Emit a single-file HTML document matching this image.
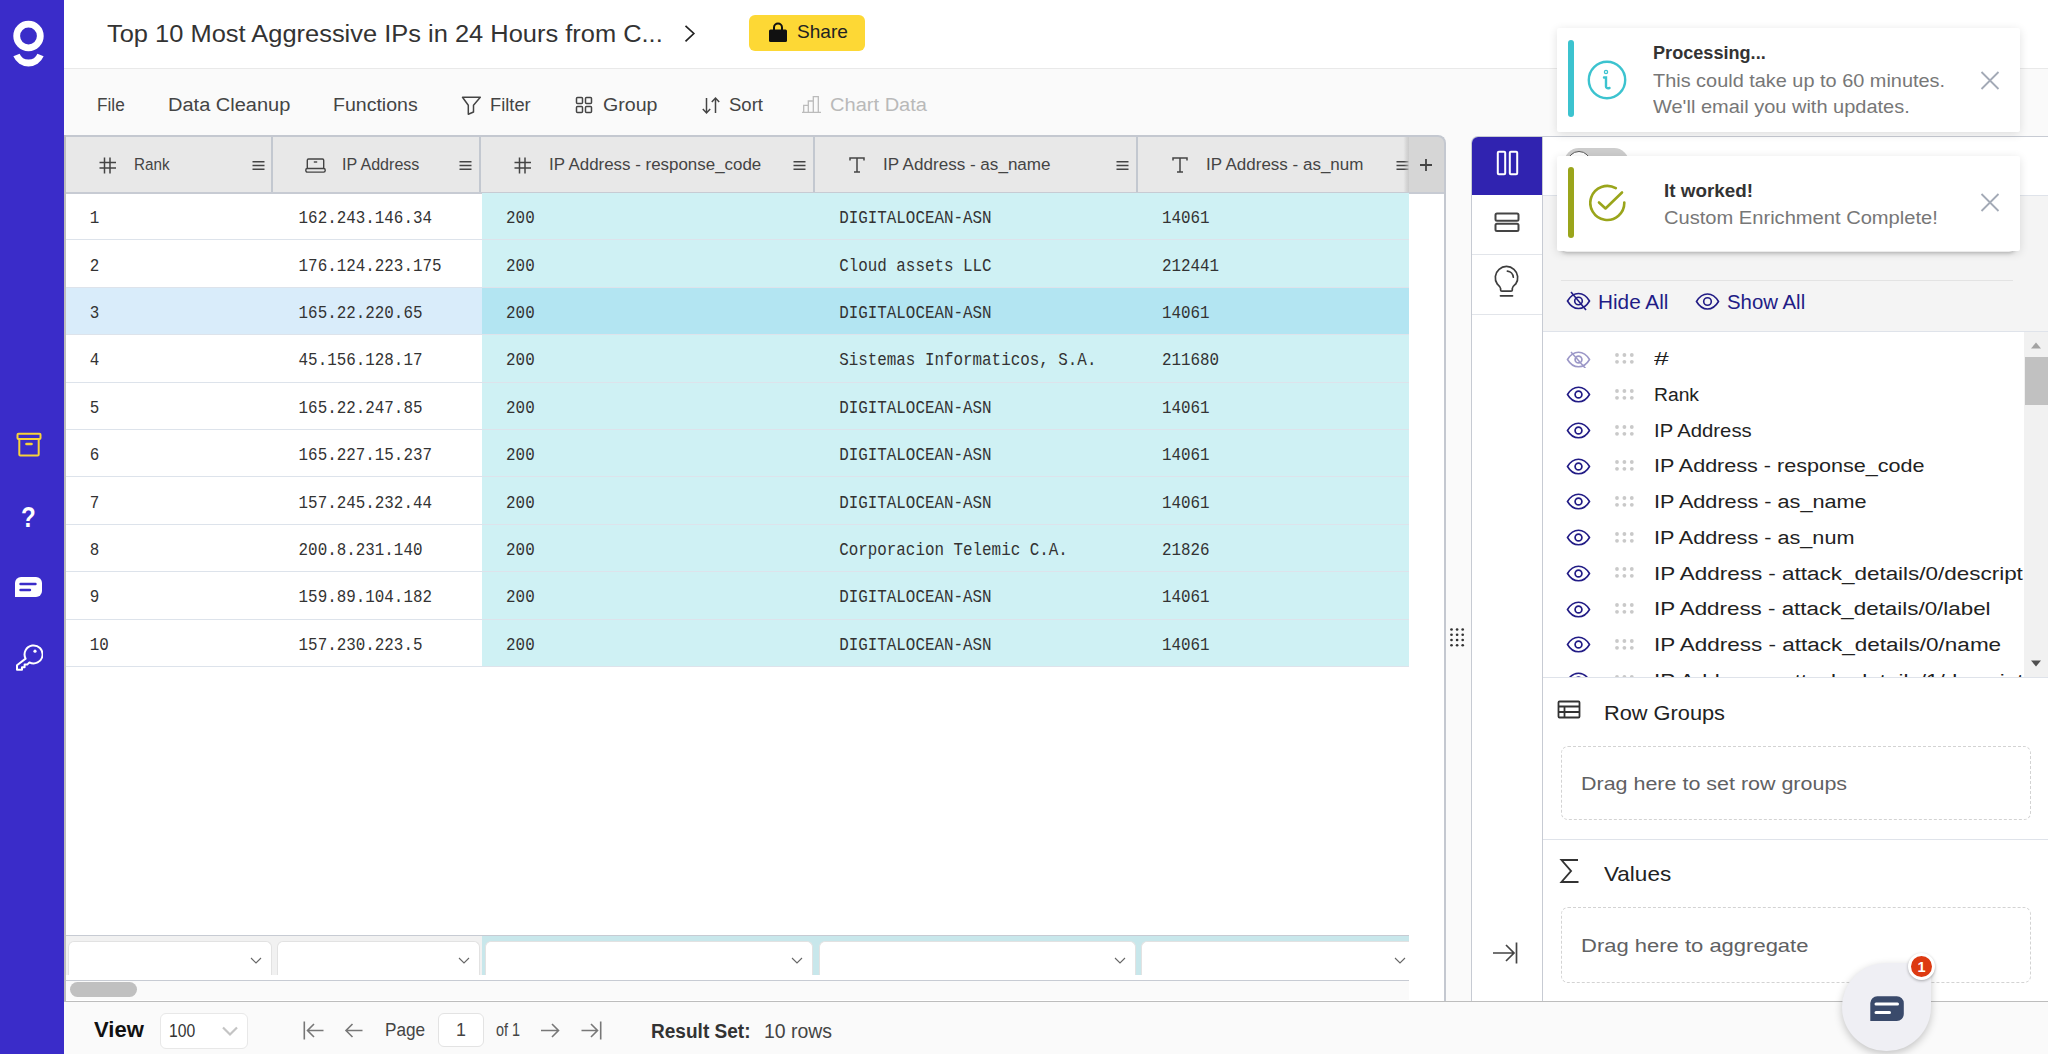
<!DOCTYPE html>
<html><head><meta charset="utf-8"><title>Grid</title><style>
html,body{margin:0;padding:0;width:2048px;height:1054px;overflow:hidden;position:relative;background:#fafafa}
.t{position:absolute;white-space:nowrap;transform-origin:0 0}
</style></head>
<body>
<div style="position:absolute;left:0px;top:0px;width:2048px;height:1054px;background:#fafafa"></div>
<div style="position:absolute;left:64px;top:0px;width:1984px;height:68px;background:#fff"></div>
<div style="position:absolute;left:64px;top:68px;width:1984px;height:1px;background:#e9e9e9"></div>
<div style="position:absolute;left:0px;top:0px;width:64px;height:1054px;background:#3a2cc9"></div>
<svg style="position:absolute;left:683px;top:24px" width="14" height="19" viewBox="0 0 14 19"><path d="M2.5 1.8 L10.8 9.5 L2.5 17.3" fill="none" stroke="#222" stroke-width="1.7"/></svg>
<div style="position:absolute;left:748.5px;top:15px;width:116.5px;height:36px;background:#fdd835;border-radius:6px"></div>
<svg style="position:absolute;left:768px;top:22px" width="20" height="21" viewBox="0 0 20 21"><path d="M6 8 V5.5 A4 4 0 0 1 14 5.5 V8" fill="none" stroke="#111" stroke-width="2"/><rect x="1" y="7.5" width="18" height="12.5" rx="1.5" fill="#111"/></svg>
<svg style="position:absolute;left:460px;top:95px" width="23" height="21" viewBox="0 0 23 21"><path d="M2.5 2.3 H20.3 L13.5 10.2 V17 L8.3 19.2 V10.2 Z" fill="none" stroke="#444" stroke-width="1.5" stroke-linejoin="round"/></svg>
<svg style="position:absolute;left:575.3px;top:95.8px" width="19" height="18" viewBox="0 0 19 18"><rect x="1.5" y="1.5" width="6" height="6" rx="1" fill="none" stroke="#444" stroke-width="1.5"/><rect x="10.5" y="1.5" width="6" height="6" rx="1" fill="none" stroke="#444" stroke-width="1.5"/><rect x="1.5" y="10.5" width="6" height="6" rx="1" fill="none" stroke="#444" stroke-width="1.5"/><rect x="10.5" y="10.5" width="6" height="6" rx="1" fill="none" stroke="#444" stroke-width="1.5"/></svg>
<svg style="position:absolute;left:701px;top:95.5px" width="20" height="19" viewBox="0 0 20 19"><path d="M5.5 2 V17 M1.8 13 L5.5 17 L9.2 13 M14.5 17 V2 M10.8 6 L14.5 2 L18.2 6" fill="none" stroke="#444" stroke-width="1.5"/></svg>
<svg style="position:absolute;left:801px;top:95px" width="21" height="20" viewBox="0 0 21 20"><path d="M1 17.3 H20 M2.7 17.3 V10.4 H7.3 V17.3 M7.3 17.3 V6 H12.3 V17.3 M12.3 17.3 V1.6 H17.3 V17.3" fill="none" stroke="#bbb" stroke-width="1.3"/></svg>
<div style="position:absolute;left:64.5px;top:135px;width:1381.0px;height:866px;background:#fff;border-top-right-radius:8px"></div>
<div style="position:absolute;left:65px;top:135.5px;width:1344px;height:57.5px;background:#e8e8e8"></div>
<div style="position:absolute;left:1408.7px;top:136.5px;width:35.3px;height:56.5px;background:#d6d6d6;border-top-right-radius:7px"></div>
<div style="position:absolute;left:1403px;top:136.5px;width:6px;height:56.5px;background:linear-gradient(90deg,rgba(0,0,0,0),rgba(0,0,0,.07))"></div>
<div style="position:absolute;left:66px;top:192px;width:1378px;height:1.5px;background:#c7cbd3"></div>
<div style="position:absolute;left:271.3px;top:136.5px;width:1.5px;height:55.5px;background:#c3c8d0"></div>
<div style="position:absolute;left:479.3px;top:136.5px;width:1.5px;height:55.5px;background:#c3c8d0"></div>
<div style="position:absolute;left:813px;top:136.5px;width:1.5px;height:55.5px;background:#c3c8d0"></div>
<div style="position:absolute;left:1136px;top:136.5px;width:1.5px;height:55.5px;background:#c3c8d0"></div>
<svg style="position:absolute;left:99px;top:156.5px" width="18" height="17" viewBox="0 0 18 17"><path d="M5.5 0.5 V16.5 M11 0.5 V16.5 M0.5 5.5 H17 M0.5 11 H17" fill="none" stroke="#444" stroke-width="1.5"/></svg>
<svg style="position:absolute;left:514px;top:156.5px" width="18" height="17" viewBox="0 0 18 17"><path d="M5.5 0.5 V16.5 M11 0.5 V16.5 M0.5 5.5 H17 M0.5 11 H17" fill="none" stroke="#444" stroke-width="1.5"/></svg>
<svg style="position:absolute;left:305px;top:157.5px" width="21" height="15" viewBox="0 0 21 15"><rect x="2.3" y="1" width="16.4" height="10" rx="1.2" fill="none" stroke="#444" stroke-width="1.4"/><rect x="0.8" y="10.5" width="19.4" height="3.6" rx="1.5" fill="#e8e8e8" stroke="#444" stroke-width="1.4"/><path d="M8.8 4 H12.2" stroke="#444" stroke-width="1.4"/></svg>
<svg style="position:absolute;left:849px;top:157px" width="16" height="16" viewBox="0 0 16 16"><path d="M1 3.5 V1 H15 V3.5 M8 1 V15 M5 15 H11" fill="none" stroke="#444" stroke-width="1.5"/></svg>
<svg style="position:absolute;left:1172px;top:157px" width="16" height="16" viewBox="0 0 16 16"><path d="M1 3.5 V1 H15 V3.5 M8 1 V15 M5 15 H11" fill="none" stroke="#444" stroke-width="1.5"/></svg>
<svg style="position:absolute;left:251.5px;top:160px" width="13" height="11" viewBox="0 0 13 11"><path d="M0.5 1.8 H12.5 M0.5 5.5 H12.5 M0.5 9.2 H12.5" stroke="#444" stroke-width="1.6"/></svg>
<svg style="position:absolute;left:459px;top:160px" width="13" height="11" viewBox="0 0 13 11"><path d="M0.5 1.8 H12.5 M0.5 5.5 H12.5 M0.5 9.2 H12.5" stroke="#444" stroke-width="1.6"/></svg>
<svg style="position:absolute;left:793px;top:160px" width="13" height="11" viewBox="0 0 13 11"><path d="M0.5 1.8 H12.5 M0.5 5.5 H12.5 M0.5 9.2 H12.5" stroke="#444" stroke-width="1.6"/></svg>
<svg style="position:absolute;left:1115.5px;top:160px" width="13" height="11" viewBox="0 0 13 11"><path d="M0.5 1.8 H12.5 M0.5 5.5 H12.5 M0.5 9.2 H12.5" stroke="#444" stroke-width="1.6"/></svg>
<svg style="position:absolute;left:1396px;top:160px" width="13" height="11" viewBox="0 0 13 11"><path d="M0.5 1.8 H12.5 M0.5 5.5 H12.5 M0.5 9.2 H12.5" stroke="#444" stroke-width="1.6"/></svg>
<div style="position:absolute;left:1408.7px;top:135.5px;width:36.5px;height:56.5px;background:#d6d6d6;border-top-right-radius:8px"></div>
<div style="position:absolute;left:1403.5px;top:137px;width:5.2px;height:55px;background:linear-gradient(90deg,rgba(214,214,214,0),rgba(200,200,200,.8))"></div>
<svg style="position:absolute;left:1419px;top:158px" width="14" height="14" viewBox="0 0 14 14"><path d="M7 1 V13 M1 7 H13" stroke="#444" stroke-width="1.8"/></svg>
<div style="position:absolute;left:481.8px;top:193.0px;width:927px;height:47.4px;background:#cff1f4"></div>
<div style="position:absolute;left:66px;top:239.4px;width:1342.7px;height:1px;background:#dde3eb"></div>
<div style="position:absolute;left:481.8px;top:240.4px;width:927px;height:47.4px;background:#cff1f4"></div>
<div style="position:absolute;left:66px;top:286.8px;width:1342.7px;height:1px;background:#dde3eb"></div>
<div style="position:absolute;left:66px;top:287.8px;width:415.8px;height:47.4px;background:#d9ecfa"></div>
<div style="position:absolute;left:481.8px;top:287.8px;width:927px;height:47.4px;background:#b3e5f2"></div>
<div style="position:absolute;left:66px;top:334.2px;width:1342.7px;height:1px;background:#dde3eb"></div>
<div style="position:absolute;left:481.8px;top:335.2px;width:927px;height:47.4px;background:#cff1f4"></div>
<div style="position:absolute;left:66px;top:381.59999999999997px;width:1342.7px;height:1px;background:#dde3eb"></div>
<div style="position:absolute;left:481.8px;top:382.6px;width:927px;height:47.4px;background:#cff1f4"></div>
<div style="position:absolute;left:66px;top:429.0px;width:1342.7px;height:1px;background:#dde3eb"></div>
<div style="position:absolute;left:481.8px;top:430.0px;width:927px;height:47.4px;background:#cff1f4"></div>
<div style="position:absolute;left:66px;top:476.4px;width:1342.7px;height:1px;background:#dde3eb"></div>
<div style="position:absolute;left:481.8px;top:477.4px;width:927px;height:47.4px;background:#cff1f4"></div>
<div style="position:absolute;left:66px;top:523.8px;width:1342.7px;height:1px;background:#dde3eb"></div>
<div style="position:absolute;left:481.8px;top:524.8px;width:927px;height:47.4px;background:#cff1f4"></div>
<div style="position:absolute;left:66px;top:571.1999999999999px;width:1342.7px;height:1px;background:#dde3eb"></div>
<div style="position:absolute;left:481.8px;top:572.2px;width:927px;height:47.4px;background:#cff1f4"></div>
<div style="position:absolute;left:66px;top:618.6px;width:1342.7px;height:1px;background:#dde3eb"></div>
<div style="position:absolute;left:481.8px;top:619.5999999999999px;width:927px;height:47.4px;background:#cff1f4"></div>
<div style="position:absolute;left:66px;top:665.9999999999999px;width:1342.7px;height:1px;background:#dde3eb"></div>
<div style="position:absolute;left:66px;top:935px;width:1342.7px;height:1px;background:#c7cbd3"></div>
<div style="position:absolute;left:66px;top:936px;width:1342.7px;height:43.60000000000002px;background:#f1f1f1"></div>
<div style="position:absolute;left:481.8px;top:936px;width:927px;height:43.60000000000002px;background:#c8e7eb"></div>
<div style="position:absolute;left:68.4px;top:940.5px;width:203.99999999999997px;height:34.0px;background:#fff;border:1px solid #e2e2e2;border-bottom:none;border-radius:6px 6px 0 0;box-sizing:border-box"></div>
<svg style="position:absolute;left:250.39999999999998px;top:956px" width="12" height="9" viewBox="0 0 12 9"><path d="M1 2 L6 7 L11 2" fill="none" stroke="#666" stroke-width="1.1"/></svg>
<div style="position:absolute;left:276.6px;top:940.5px;width:203.79999999999995px;height:34.0px;background:#fff;border:1px solid #e2e2e2;border-bottom:none;border-radius:6px 6px 0 0;box-sizing:border-box"></div>
<svg style="position:absolute;left:458.4px;top:956px" width="12" height="9" viewBox="0 0 12 9"><path d="M1 2 L6 7 L11 2" fill="none" stroke="#666" stroke-width="1.1"/></svg>
<div style="position:absolute;left:485px;top:940.5px;width:328.29999999999995px;height:34.0px;background:#fff;border:1px solid #e2e2e2;border-bottom:none;border-radius:6px 6px 0 0;box-sizing:border-box"></div>
<svg style="position:absolute;left:791.3px;top:956px" width="12" height="9" viewBox="0 0 12 9"><path d="M1 2 L6 7 L11 2" fill="none" stroke="#666" stroke-width="1.1"/></svg>
<div style="position:absolute;left:818.5px;top:940.5px;width:317.5px;height:34.0px;background:#fff;border:1px solid #e2e2e2;border-bottom:none;border-radius:6px 6px 0 0;box-sizing:border-box"></div>
<svg style="position:absolute;left:1114px;top:956px" width="12" height="9" viewBox="0 0 12 9"><path d="M1 2 L6 7 L11 2" fill="none" stroke="#666" stroke-width="1.1"/></svg>
<div style="position:absolute;left:1141px;top:940.5px;width:267.70000000000005px;height:34.0px;background:#fff;border:1px solid #e2e2e2;border-bottom:none;border-radius:6px 6px 0 0;box-sizing:border-box;border-right:none;border-top-right-radius:0"></div>
<svg style="position:absolute;left:1394px;top:956px" width="12" height="9" viewBox="0 0 12 9"><path d="M1 2 L6 7 L11 2" fill="none" stroke="#666" stroke-width="1.1"/></svg>
<div style="position:absolute;left:66px;top:975px;width:1342.7px;height:4.6px;background:#fff"></div>
<div style="position:absolute;left:66px;top:979.6px;width:1342.7px;height:1px;background:#c7cbd3"></div>
<div style="position:absolute;left:66px;top:980.6px;width:1342.7px;height:19.4px;background:#fafafa"></div>
<div style="position:absolute;left:70px;top:982px;width:67px;height:15px;background:#c0c0c0;border-radius:8px"></div>
<svg style="position:absolute;left:1450px;top:627.5px" width="15" height="20" viewBox="0 0 15 20"><circle cx="1.5" cy="1.5" r="1.35" fill="#333"/><circle cx="1.5" cy="6.75" r="1.35" fill="#333"/><circle cx="1.5" cy="12.0" r="1.35" fill="#333"/><circle cx="1.5" cy="17.25" r="1.35" fill="#333"/><circle cx="7.1" cy="1.5" r="1.35" fill="#333"/><circle cx="7.1" cy="6.75" r="1.35" fill="#333"/><circle cx="7.1" cy="12.0" r="1.35" fill="#333"/><circle cx="7.1" cy="17.25" r="1.35" fill="#333"/><circle cx="12.7" cy="1.5" r="1.35" fill="#333"/><circle cx="12.7" cy="6.75" r="1.35" fill="#333"/><circle cx="12.7" cy="12.0" r="1.35" fill="#333"/><circle cx="12.7" cy="17.25" r="1.35" fill="#333"/></svg>
<div style="position:absolute;left:1470.5px;top:135.5px;width:73px;height:866px;background:#fff;border:1.5px solid #c7cbd3;border-right:1px solid #c7cbd3;border-top-left-radius:7px;border-bottom:none;box-sizing:border-box"></div>
<div style="position:absolute;left:1472px;top:137px;width:70.5px;height:57.5px;background:#3023b0;border-top-left-radius:6px"></div>
<div style="position:absolute;left:1472px;top:254px;width:70px;height:1px;background:#e2e5ea"></div>
<div style="position:absolute;left:1472px;top:313.5px;width:70px;height:1px;background:#e2e5ea"></div>
<svg style="position:absolute;left:1496px;top:150px" width="23" height="26" viewBox="0 0 23 26"><rect x="1.8" y="1.8" width="7.4" height="22.4" rx="1" fill="none" stroke="#fff" stroke-width="2"/><rect x="13.8" y="1.8" width="7.4" height="22.4" rx="1" fill="none" stroke="#fff" stroke-width="2"/></svg>
<svg style="position:absolute;left:1494px;top:211.5px" width="26" height="21" viewBox="0 0 26 21"><rect x="1.5" y="1.5" width="23" height="7.2" rx="1.5" fill="none" stroke="#444" stroke-width="2"/><rect x="1.5" y="11.8" width="23" height="7.2" rx="1.5" fill="none" stroke="#444" stroke-width="2"/></svg>
<svg style="position:absolute;left:1493px;top:265px" width="27" height="33" viewBox="0 0 27 33"><path d="M4.27 19 A11.2 11.2 0 1 1 22.73 19 C20.5 21 19.3 21.8 19.3 23.5 V25 Q19.3 26.2 18 26.2 H8.9 Q7.6 26.2 7.6 25 V23.5 C7.6 21.8 6.5 21 4.27 19 Z" fill="none" stroke="#3d3d3d" stroke-width="1.7" stroke-linejoin="round"/><path d="M7.5 30.8 H19.5" stroke="#3d3d3d" stroke-width="1.8" stroke-linecap="round"/><path d="M14.4 6.1 A6.5 6.5 0 0 1 20.3 12.2" fill="none" stroke="#3d3d3d" stroke-width="1.7" stroke-linecap="round"/></svg>
<svg style="position:absolute;left:1491px;top:940px" width="28" height="26" viewBox="0 0 28 26"><path d="M2 13 H23 M15 5 L23 13 L15 21 M25.5 2.5 V23.5" fill="none" stroke="#444" stroke-width="1.7"/></svg>
<div style="position:absolute;left:1543px;top:135.5px;width:505px;height:1.5px;background:#c7cbd3"></div>
<div style="position:absolute;left:1543px;top:137px;width:505px;height:58px;background:#fff"></div>
<div style="position:absolute;left:1564px;top:148px;width:64.5px;height:30px;background:#cdcdcd;border-radius:15px"></div>
<div style="position:absolute;left:1567px;top:151px;width:24px;height:24px;background:#fff;border:1.5px solid #555;border-radius:50%;box-sizing:border-box"></div>
<div style="position:absolute;left:1543px;top:195px;width:505px;height:1px;background:#dfe3ea"></div>
<div style="position:absolute;left:1543px;top:196px;width:505px;height:135.5px;background:#f4f4f4"></div>
<div style="position:absolute;left:1561px;top:280px;width:452px;height:1px;background:#e3e3e3"></div>
<svg style="position:absolute;left:1566px;top:291px" width="25" height="20" viewBox="0 0 25 20"><path d="M1.5 10 C5 4 9 2.5 12.5 2.5 C16 2.5 20 4 23.5 10 C20 16 16 17.5 12.5 17.5 C9 17.5 5 16 1.5 10 Z" fill="none" stroke="#221c86" stroke-width="1.6"/><circle cx="12.5" cy="10" r="3.8" fill="none" stroke="#221c86" stroke-width="1.6"/><path d="M5 1 L20 19" stroke="#221c86" stroke-width="1.6"/></svg>
<svg style="position:absolute;left:1695px;top:292px" width="25" height="19" viewBox="0 0 25 19"><path d="M1.5 9.5 C5 3.5 9 2 12.5 2 C16 2 20 3.5 23.5 9.5 C20 15.5 16 17 12.5 17 C9 17 5 15.5 1.5 9.5 Z" fill="none" stroke="#221c86" stroke-width="1.6"/><circle cx="12.5" cy="9.5" r="3.8" fill="none" stroke="#221c86" stroke-width="1.6"/></svg>
<div style="position:absolute;left:1543px;top:331px;width:505px;height:1px;background:#dfe3ea"></div>
<div style="position:absolute;left:1543px;top:332px;width:505px;height:345px;background:#fff"></div>
<div style="position:absolute;left:1543px;top:332px;width:481px;height:345px;overflow:hidden">
<svg style="position:absolute;left:23px;top:18.50px" width="25" height="17" viewBox="0 0 25 17"><path d="M1.5 8.5 C5 2.5 9 1.2 12.5 1.2 C16 1.2 20 2.5 23.5 8.5 C20 14.5 16 15.8 12.5 15.8 C9 15.8 5 14.5 1.5 8.5 Z" fill="none" stroke="#9c98c8" stroke-width="1.6"/><circle cx="12.5" cy="8.5" r="3.4" fill="none" stroke="#9c98c8" stroke-width="1.7"/><path d="M5 1 L20 18" stroke="#9c98c8" stroke-width="1.5"/></svg>
<svg style="position:absolute;left:72.20000000000005px;top:21.10px" width="19" height="11" viewBox="0 0 19 11"><circle cx="2.0" cy="2.0" r="1.9" fill="#c9c9c9"/><circle cx="2.0" cy="8.8" r="1.9" fill="#c9c9c9"/><circle cx="9.4" cy="2.0" r="1.9" fill="#c9c9c9"/><circle cx="9.4" cy="8.8" r="1.9" fill="#c9c9c9"/><circle cx="16.8" cy="2.0" r="1.9" fill="#c9c9c9"/><circle cx="16.8" cy="8.8" r="1.9" fill="#c9c9c9"/></svg>
<svg style="position:absolute;left:23px;top:54.22px" width="25" height="17" viewBox="0 0 25 17"><path d="M1.5 8.5 C5 2.5 9 1.2 12.5 1.2 C16 1.2 20 2.5 23.5 8.5 C20 14.5 16 15.8 12.5 15.8 C9 15.8 5 14.5 1.5 8.5 Z" fill="none" stroke="#221c86" stroke-width="1.6"/><circle cx="12.5" cy="8.5" r="3.4" fill="none" stroke="#221c86" stroke-width="1.7"/></svg>
<svg style="position:absolute;left:72.20000000000005px;top:56.82px" width="19" height="11" viewBox="0 0 19 11"><circle cx="2.0" cy="2.0" r="1.9" fill="#c9c9c9"/><circle cx="2.0" cy="8.8" r="1.9" fill="#c9c9c9"/><circle cx="9.4" cy="2.0" r="1.9" fill="#c9c9c9"/><circle cx="9.4" cy="8.8" r="1.9" fill="#c9c9c9"/><circle cx="16.8" cy="2.0" r="1.9" fill="#c9c9c9"/><circle cx="16.8" cy="8.8" r="1.9" fill="#c9c9c9"/></svg>
<svg style="position:absolute;left:23px;top:89.94px" width="25" height="17" viewBox="0 0 25 17"><path d="M1.5 8.5 C5 2.5 9 1.2 12.5 1.2 C16 1.2 20 2.5 23.5 8.5 C20 14.5 16 15.8 12.5 15.8 C9 15.8 5 14.5 1.5 8.5 Z" fill="none" stroke="#221c86" stroke-width="1.6"/><circle cx="12.5" cy="8.5" r="3.4" fill="none" stroke="#221c86" stroke-width="1.7"/></svg>
<svg style="position:absolute;left:72.20000000000005px;top:92.54px" width="19" height="11" viewBox="0 0 19 11"><circle cx="2.0" cy="2.0" r="1.9" fill="#c9c9c9"/><circle cx="2.0" cy="8.8" r="1.9" fill="#c9c9c9"/><circle cx="9.4" cy="2.0" r="1.9" fill="#c9c9c9"/><circle cx="9.4" cy="8.8" r="1.9" fill="#c9c9c9"/><circle cx="16.8" cy="2.0" r="1.9" fill="#c9c9c9"/><circle cx="16.8" cy="8.8" r="1.9" fill="#c9c9c9"/></svg>
<svg style="position:absolute;left:23px;top:125.66px" width="25" height="17" viewBox="0 0 25 17"><path d="M1.5 8.5 C5 2.5 9 1.2 12.5 1.2 C16 1.2 20 2.5 23.5 8.5 C20 14.5 16 15.8 12.5 15.8 C9 15.8 5 14.5 1.5 8.5 Z" fill="none" stroke="#221c86" stroke-width="1.6"/><circle cx="12.5" cy="8.5" r="3.4" fill="none" stroke="#221c86" stroke-width="1.7"/></svg>
<svg style="position:absolute;left:72.20000000000005px;top:128.26px" width="19" height="11" viewBox="0 0 19 11"><circle cx="2.0" cy="2.0" r="1.9" fill="#c9c9c9"/><circle cx="2.0" cy="8.8" r="1.9" fill="#c9c9c9"/><circle cx="9.4" cy="2.0" r="1.9" fill="#c9c9c9"/><circle cx="9.4" cy="8.8" r="1.9" fill="#c9c9c9"/><circle cx="16.8" cy="2.0" r="1.9" fill="#c9c9c9"/><circle cx="16.8" cy="8.8" r="1.9" fill="#c9c9c9"/></svg>
<svg style="position:absolute;left:23px;top:161.38px" width="25" height="17" viewBox="0 0 25 17"><path d="M1.5 8.5 C5 2.5 9 1.2 12.5 1.2 C16 1.2 20 2.5 23.5 8.5 C20 14.5 16 15.8 12.5 15.8 C9 15.8 5 14.5 1.5 8.5 Z" fill="none" stroke="#221c86" stroke-width="1.6"/><circle cx="12.5" cy="8.5" r="3.4" fill="none" stroke="#221c86" stroke-width="1.7"/></svg>
<svg style="position:absolute;left:72.20000000000005px;top:163.98px" width="19" height="11" viewBox="0 0 19 11"><circle cx="2.0" cy="2.0" r="1.9" fill="#c9c9c9"/><circle cx="2.0" cy="8.8" r="1.9" fill="#c9c9c9"/><circle cx="9.4" cy="2.0" r="1.9" fill="#c9c9c9"/><circle cx="9.4" cy="8.8" r="1.9" fill="#c9c9c9"/><circle cx="16.8" cy="2.0" r="1.9" fill="#c9c9c9"/><circle cx="16.8" cy="8.8" r="1.9" fill="#c9c9c9"/></svg>
<svg style="position:absolute;left:23px;top:197.10px" width="25" height="17" viewBox="0 0 25 17"><path d="M1.5 8.5 C5 2.5 9 1.2 12.5 1.2 C16 1.2 20 2.5 23.5 8.5 C20 14.5 16 15.8 12.5 15.8 C9 15.8 5 14.5 1.5 8.5 Z" fill="none" stroke="#221c86" stroke-width="1.6"/><circle cx="12.5" cy="8.5" r="3.4" fill="none" stroke="#221c86" stroke-width="1.7"/></svg>
<svg style="position:absolute;left:72.20000000000005px;top:199.70px" width="19" height="11" viewBox="0 0 19 11"><circle cx="2.0" cy="2.0" r="1.9" fill="#c9c9c9"/><circle cx="2.0" cy="8.8" r="1.9" fill="#c9c9c9"/><circle cx="9.4" cy="2.0" r="1.9" fill="#c9c9c9"/><circle cx="9.4" cy="8.8" r="1.9" fill="#c9c9c9"/><circle cx="16.8" cy="2.0" r="1.9" fill="#c9c9c9"/><circle cx="16.8" cy="8.8" r="1.9" fill="#c9c9c9"/></svg>
<svg style="position:absolute;left:23px;top:232.82px" width="25" height="17" viewBox="0 0 25 17"><path d="M1.5 8.5 C5 2.5 9 1.2 12.5 1.2 C16 1.2 20 2.5 23.5 8.5 C20 14.5 16 15.8 12.5 15.8 C9 15.8 5 14.5 1.5 8.5 Z" fill="none" stroke="#221c86" stroke-width="1.6"/><circle cx="12.5" cy="8.5" r="3.4" fill="none" stroke="#221c86" stroke-width="1.7"/></svg>
<svg style="position:absolute;left:72.20000000000005px;top:235.42px" width="19" height="11" viewBox="0 0 19 11"><circle cx="2.0" cy="2.0" r="1.9" fill="#c9c9c9"/><circle cx="2.0" cy="8.8" r="1.9" fill="#c9c9c9"/><circle cx="9.4" cy="2.0" r="1.9" fill="#c9c9c9"/><circle cx="9.4" cy="8.8" r="1.9" fill="#c9c9c9"/><circle cx="16.8" cy="2.0" r="1.9" fill="#c9c9c9"/><circle cx="16.8" cy="8.8" r="1.9" fill="#c9c9c9"/></svg>
<svg style="position:absolute;left:23px;top:268.54px" width="25" height="17" viewBox="0 0 25 17"><path d="M1.5 8.5 C5 2.5 9 1.2 12.5 1.2 C16 1.2 20 2.5 23.5 8.5 C20 14.5 16 15.8 12.5 15.8 C9 15.8 5 14.5 1.5 8.5 Z" fill="none" stroke="#221c86" stroke-width="1.6"/><circle cx="12.5" cy="8.5" r="3.4" fill="none" stroke="#221c86" stroke-width="1.7"/></svg>
<svg style="position:absolute;left:72.20000000000005px;top:271.14px" width="19" height="11" viewBox="0 0 19 11"><circle cx="2.0" cy="2.0" r="1.9" fill="#c9c9c9"/><circle cx="2.0" cy="8.8" r="1.9" fill="#c9c9c9"/><circle cx="9.4" cy="2.0" r="1.9" fill="#c9c9c9"/><circle cx="9.4" cy="8.8" r="1.9" fill="#c9c9c9"/><circle cx="16.8" cy="2.0" r="1.9" fill="#c9c9c9"/><circle cx="16.8" cy="8.8" r="1.9" fill="#c9c9c9"/></svg>
<svg style="position:absolute;left:23px;top:304.26px" width="25" height="17" viewBox="0 0 25 17"><path d="M1.5 8.5 C5 2.5 9 1.2 12.5 1.2 C16 1.2 20 2.5 23.5 8.5 C20 14.5 16 15.8 12.5 15.8 C9 15.8 5 14.5 1.5 8.5 Z" fill="none" stroke="#221c86" stroke-width="1.6"/><circle cx="12.5" cy="8.5" r="3.4" fill="none" stroke="#221c86" stroke-width="1.7"/></svg>
<svg style="position:absolute;left:72.20000000000005px;top:306.86px" width="19" height="11" viewBox="0 0 19 11"><circle cx="2.0" cy="2.0" r="1.9" fill="#c9c9c9"/><circle cx="2.0" cy="8.8" r="1.9" fill="#c9c9c9"/><circle cx="9.4" cy="2.0" r="1.9" fill="#c9c9c9"/><circle cx="9.4" cy="8.8" r="1.9" fill="#c9c9c9"/><circle cx="16.8" cy="2.0" r="1.9" fill="#c9c9c9"/><circle cx="16.8" cy="8.8" r="1.9" fill="#c9c9c9"/></svg>
<svg style="position:absolute;left:23px;top:339.98px" width="25" height="17" viewBox="0 0 25 17"><path d="M1.5 8.5 C5 2.5 9 1.2 12.5 1.2 C16 1.2 20 2.5 23.5 8.5 C20 14.5 16 15.8 12.5 15.8 C9 15.8 5 14.5 1.5 8.5 Z" fill="none" stroke="#221c86" stroke-width="1.6"/><circle cx="12.5" cy="8.5" r="3.4" fill="none" stroke="#221c86" stroke-width="1.7"/></svg>
<svg style="position:absolute;left:72.20000000000005px;top:342.58px" width="19" height="11" viewBox="0 0 19 11"><circle cx="2.0" cy="2.0" r="1.9" fill="#c9c9c9"/><circle cx="2.0" cy="8.8" r="1.9" fill="#c9c9c9"/><circle cx="9.4" cy="2.0" r="1.9" fill="#c9c9c9"/><circle cx="9.4" cy="8.8" r="1.9" fill="#c9c9c9"/><circle cx="16.8" cy="2.0" r="1.9" fill="#c9c9c9"/><circle cx="16.8" cy="8.8" r="1.9" fill="#c9c9c9"/></svg>
</div>
<div style="position:absolute;left:2024px;top:332px;width:24px;height:345px;background:#f1f1f1"></div>
<svg style="position:absolute;left:2030px;top:340px" width="12" height="10" viewBox="0 0 12 10"><path d="M1 8.5 L6 2.5 L11 8.5 Z" fill="#a3a3a3"/></svg>
<svg style="position:absolute;left:2030px;top:659px" width="12" height="10" viewBox="0 0 12 10"><path d="M1 1.5 L6 7.5 L11 1.5 Z" fill="#505050"/></svg>
<div style="position:absolute;left:2025px;top:357px;width:23px;height:48px;background:#c1c1c1"></div>
<div style="position:absolute;left:1543px;top:677px;width:505px;height:1px;background:#dfe3ea"></div>
<div style="position:absolute;left:1543px;top:678px;width:505px;height:323px;background:#fff"></div>
<svg style="position:absolute;left:1557px;top:700px" width="24" height="19" viewBox="0 0 24 19"><rect x="1.5" y="1.5" width="21" height="16" rx="1" fill="none" stroke="#333" stroke-width="1.8"/><path d="M1.5 6.5 H22.5 M1.5 12 H22.5 M7.5 6.5 V17.5" stroke="#333" stroke-width="1.8"/></svg>
<div style="position:absolute;left:1561.3px;top:745.8px;width:470px;height:74.5px;border:1px dashed #d3d3d3;border-radius:7px;box-sizing:border-box"></div>
<div style="position:absolute;left:1543px;top:839px;width:505px;height:1px;background:#dfe3ea"></div>
<svg style="position:absolute;left:1559px;top:858px" width="22" height="26" viewBox="0 0 22 26"><path d="M19 2 H2.5 L12 13 L2.5 24 H19.5" fill="none" stroke="#333" stroke-width="1.9" stroke-linejoin="miter"/></svg>
<div style="position:absolute;left:1561.3px;top:907.3px;width:470px;height:75.8px;border:1px dashed #d3d3d3;border-radius:7px;box-sizing:border-box"></div>
<div style="position:absolute;left:64px;top:1000.5px;width:1984px;height:1.2px;background:#bdbdbd"></div>
<div style="position:absolute;left:64px;top:1001.7px;width:1984px;height:52.3px;background:#fafafa"></div>
<div style="position:absolute;left:160.3px;top:1012.5px;width:88px;height:36px;background:#fff;border:1px solid #e8e8e8;border-radius:6px;box-sizing:border-box"></div>
<svg style="position:absolute;left:221px;top:1025px" width="18" height="12" viewBox="0 0 18 12"><path d="M2 2.5 L9 9.5 L16 2.5" fill="none" stroke="#c4c4c4" stroke-width="2.2"/></svg>
<svg style="position:absolute;left:302px;top:1020px" width="23" height="21" viewBox="0 0 23 21"><path d="M2.3 1.5 V19.5 M21.5 10.5 H5.5 M12 4 L5.5 10.5 L12 17" fill="none" stroke="#777" stroke-width="1.6"/></svg>
<svg style="position:absolute;left:343px;top:1020px" width="21" height="21" viewBox="0 0 21 21"><path d="M19.5 10.5 H3 M9.5 4 L3 10.5 L9.5 17" fill="none" stroke="#777" stroke-width="1.6"/></svg>
<div style="position:absolute;left:438px;top:1013.4px;width:46px;height:34px;background:#fff;border:1px solid #e3e3e3;border-radius:6px;box-sizing:border-box"></div>
<svg style="position:absolute;left:539px;top:1020px" width="22" height="21" viewBox="0 0 22 21"><path d="M2 10.5 H19.5 M13 4 L19.5 10.5 L13 17" fill="none" stroke="#777" stroke-width="1.6"/></svg>
<svg style="position:absolute;left:580px;top:1020px" width="23" height="21" viewBox="0 0 23 21"><path d="M1.5 10.5 H17.5 M11 4 L17.5 10.5 L11 17 M20.7 1.5 V19.5" fill="none" stroke="#777" stroke-width="1.6"/></svg>
<div style="position:absolute;left:1542px;top:136px;width:1.3px;height:865px;background:#c7cbd3"></div>
<div style="position:absolute;left:64.5px;top:135px;width:1381.0px;height:866px;border:2px solid #c4c8d0;border-left:none;border-bottom:none;border-top-right-radius:8px;box-sizing:border-box"></div>
<div style="position:absolute;left:64px;top:135px;width:1.8px;height:866px;background:#bdbdbd"></div>
<div style="position:absolute;left:1557px;top:28px;width:462.5px;height:103.5px;background:#fff;box-shadow:0 2px 10px rgba(0,0,0,.12);border-radius:2px"></div>
<div style="position:absolute;left:1568px;top:39.7px;width:6px;height:77px;background:#3cc3cf;border-radius:3px"></div>
<svg style="position:absolute;left:1586px;top:59px" width="42" height="42" viewBox="0 0 42 42"><circle cx="21" cy="21" r="18.2" fill="none" stroke="#3cc3cf" stroke-width="2.4"/><circle cx="20" cy="13" r="1.6" fill="none" stroke="#3cc3cf" stroke-width="1.3"/><path d="M18 18.5 H20 V27.5 C20 29 21 29.5 23.5 29" fill="none" stroke="#3cc3cf" stroke-width="2.4" stroke-linecap="round"/></svg>
<svg style="position:absolute;left:1979px;top:70px" width="22" height="21" viewBox="0 0 22 21"><path d="M2.5 2 L19.5 19 M19.5 2 L2.5 19" stroke="#a3aab6" stroke-width="1.8"/></svg>
<div style="position:absolute;left:1561px;top:246px;width:454px;height:6px;background:#fff;box-shadow:0 1px 4px rgba(0,0,0,.25);border-radius:0 0 6px 6px"></div>
<div style="position:absolute;left:1557px;top:156px;width:462.5px;height:95px;background:#fff;box-shadow:0 2px 10px rgba(0,0,0,.12);border-radius:2px"></div>
<div style="position:absolute;left:1568px;top:167px;width:6px;height:71px;background:#9aa51b;border-radius:3px"></div>
<svg style="position:absolute;left:1588.5px;top:184px" width="40" height="40" viewBox="0 0 40 40"><path d="M35.3 18.5 A17 17 0 1 1 26.8 4.2" fill="none" stroke="#9aa51b" stroke-width="2.6" stroke-linecap="round"/><path d="M10 18.5 L16.5 24.5 L33 8.5" fill="none" stroke="#9aa51b" stroke-width="2.6" stroke-linecap="round" stroke-linejoin="round"/></svg>
<svg style="position:absolute;left:1979px;top:192px" width="22" height="21" viewBox="0 0 22 21"><path d="M2.5 2 L19.5 19 M19.5 2 L2.5 19" stroke="#a3aab6" stroke-width="1.8"/></svg>
<div style="position:absolute;left:1842.2px;top:962.7px;width:88.7px;height:88.7px;background:#efeff4;border-radius:50% 0 50% 50%;box-shadow:0 3px 8px rgba(0,0,0,.22)"></div>
<svg style="position:absolute;left:1869px;top:995px" width="36" height="27" viewBox="0 0 36 27"><path d="M1.3 8 A7 7 0 0 1 8.3 1.3 H27.8 A7 7 0 0 1 34.8 8.3 V19 A7 7 0 0 1 27.8 26 H1.3 Z" fill="#3a4a6b"/><path d="M7 9 H28.5 M7 17.5 H20.5" stroke="#fff" stroke-width="3" stroke-linecap="round"/></svg>
<div style="position:absolute;left:1908px;top:952.5px;width:27px;height:27px;background:#dd3a12;border:3px solid #fff;border-radius:50%;box-sizing:border-box;box-shadow:0 1px 3px rgba(0,0,0,.3)"></div>
<svg style="position:absolute;left:12px;top:20px" width="34" height="49" viewBox="0 0 34 49"><circle cx="16.5" cy="16" r="11.8" fill="none" stroke="#fff" stroke-width="6.8"/><path d="M4.5 35 A13 13 0 0 0 28.5 35" fill="none" stroke="#fff" stroke-width="6.8"/></svg>
<svg style="position:absolute;left:16px;top:432px" width="26" height="25" viewBox="0 0 26 25"><rect x="1.5" y="1.8" width="23" height="5.2" rx="1" fill="none" stroke="#f7d23a" stroke-width="2"/><path d="M3.3 7 V22.5 A1 1 0 0 0 4.3 23.5 H21.7 A1 1 0 0 0 22.7 22.5 V7" fill="none" stroke="#f7d23a" stroke-width="2"/><path d="M10.5 12 H15.5" stroke="#f7d23a" stroke-width="2.6" stroke-linecap="round"/></svg>
<svg style="position:absolute;left:14px;top:576px" width="29" height="22" viewBox="0 0 29 22"><path d="M1 7 A6 6 0 0 1 7 1 H22 A6 6 0 0 1 28 7 V15 A6 6 0 0 1 22 21 H1 Z" fill="#fff"/><path d="M6.5 8 H21.5 M6.5 14 H16" stroke="#3a2cc9" stroke-width="2.4" stroke-linecap="round"/></svg>
<svg style="position:absolute;left:14px;top:644px" width="29" height="28" viewBox="0 0 29 28"><path d="M11.6 14.6 A9 9 0 1 1 15.4 18.4 L13.2 20.6 H10.6 V23.2 H8 V25.8 H3 V21.2 Z" fill="none" stroke="#fff" stroke-width="2" stroke-linejoin="round"/><circle cx="21" cy="7.2" r="1.6" fill="#fff"/></svg>
<div style="position:absolute;left:1543px;top:332px;width:481px;height:345px;overflow:hidden">
<div class="t" id="li0" style="left:110.60px;top:17.24px;font-size:19.13px;line-height:19.13px;font-family:'Liberation Sans', sans-serif;color:#222;transform:scaleX(1.3818);">#</div>
<div class="t" id="li1" style="left:110.60px;top:52.96px;font-size:19.13px;line-height:19.13px;font-family:'Liberation Sans', sans-serif;color:#222;transform:scaleX(1.0089);">Rank</div>
<div class="t" id="li2" style="left:110.60px;top:88.68px;font-size:19.13px;line-height:19.13px;font-family:'Liberation Sans', sans-serif;color:#222;transform:scaleX(1.0609);">IP Address</div>
<div class="t" id="li3" style="left:110.60px;top:124.40px;font-size:19.13px;line-height:19.13px;font-family:'Liberation Sans', sans-serif;color:#222;transform:scaleX(1.1279);">IP Address - response_code</div>
<div class="t" id="li4" style="left:110.60px;top:160.12px;font-size:19.13px;line-height:19.13px;font-family:'Liberation Sans', sans-serif;color:#222;transform:scaleX(1.1330);">IP Address - as_name</div>
<div class="t" id="li5" style="left:110.60px;top:195.84px;font-size:19.13px;line-height:19.13px;font-family:'Liberation Sans', sans-serif;color:#222;transform:scaleX(1.1322);">IP Address - as_num</div>
<div class="t" id="li6" style="left:110.60px;top:231.56px;font-size:19.13px;line-height:19.13px;font-family:'Liberation Sans', sans-serif;color:#222;transform:scaleX(1.1745);">IP Address - attack_details/0/descript</div>
<div class="t" id="li7" style="left:110.60px;top:267.28px;font-size:19.13px;line-height:19.13px;font-family:'Liberation Sans', sans-serif;color:#222;transform:scaleX(1.1705);">IP Address - attack_details/0/label</div>
<div class="t" id="li8" style="left:110.60px;top:303.00px;font-size:19.13px;line-height:19.13px;font-family:'Liberation Sans', sans-serif;color:#222;transform:scaleX(1.1769);">IP Address - attack_details/0/name</div>
<div class="t" id="li9" style="left:110.60px;top:338.72px;font-size:19.13px;line-height:19.13px;font-family:'Liberation Sans', sans-serif;color:#222;transform:scaleX(1.1765);">IP Address - attack_details/1/description</div>
</div>
<div class="t" id="title" style="left:106.80px;top:21.85px;font-size:24.06px;line-height:24.06px;font-family:'Liberation Sans', sans-serif;color:#333;font-weight:400;transform:scaleX(1.0581);">Top 10 Most Aggressive IPs in 24 Hours from C...</div>
<div class="t" id="share" style="left:796.50px;top:24.32px;font-size:17.97px;line-height:17.97px;font-family:'Liberation Sans', sans-serif;color:#222;font-weight:400;transform:scaleX(1.0625);">Share</div>
<div class="t" id="tb1" style="left:97.00px;top:95.86px;font-size:18.41px;line-height:18.41px;font-family:'Liberation Sans', sans-serif;color:#444;font-weight:400;transform:scaleX(0.9333);">File</div>
<div class="t" id="tb2" style="left:167.80px;top:95.86px;font-size:18.41px;line-height:18.41px;font-family:'Liberation Sans', sans-serif;color:#444;font-weight:400;transform:scaleX(1.0867);">Data Cleanup</div>
<div class="t" id="tb3" style="left:332.60px;top:95.86px;font-size:18.41px;line-height:18.41px;font-family:'Liberation Sans', sans-serif;color:#444;font-weight:400;transform:scaleX(1.0613);">Functions</div>
<div class="t" id="tb4" style="left:490.00px;top:95.86px;font-size:18.41px;line-height:18.41px;font-family:'Liberation Sans', sans-serif;color:#444;font-weight:400;transform:scaleX(0.9951);">Filter</div>
<div class="t" id="tb5" style="left:603.00px;top:95.86px;font-size:18.41px;line-height:18.41px;font-family:'Liberation Sans', sans-serif;color:#444;font-weight:400;transform:scaleX(1.0647);">Group</div>
<div class="t" id="tb6" style="left:729.30px;top:95.86px;font-size:18.41px;line-height:18.41px;font-family:'Liberation Sans', sans-serif;color:#444;font-weight:400;transform:scaleX(1.0059);">Sort</div>
<div class="t" id="tb7" style="left:830.00px;top:95.86px;font-size:18.41px;line-height:18.41px;font-family:'Liberation Sans', sans-serif;color:#b9b9b9;font-weight:400;transform:scaleX(1.0899);">Chart Data</div>
<div class="t" id="h1" style="left:134.00px;top:157.40px;font-size:15.65px;line-height:15.65px;font-family:'Liberation Sans', sans-serif;color:#444;font-weight:400;transform:scaleX(0.9730);">Rank</div>
<div class="t" id="h2" style="left:341.70px;top:157.40px;font-size:15.65px;line-height:15.65px;font-family:'Liberation Sans', sans-serif;color:#444;font-weight:400;transform:scaleX(1.0267);">IP Address</div>
<div class="t" id="h3" style="left:549.00px;top:157.40px;font-size:15.65px;line-height:15.65px;font-family:'Liberation Sans', sans-serif;color:#444;font-weight:400;transform:scaleX(1.0816);">IP Address - response_code</div>
<div class="t" id="h4" style="left:883.00px;top:157.40px;font-size:15.65px;line-height:15.65px;font-family:'Liberation Sans', sans-serif;color:#444;font-weight:400;transform:scaleX(1.0909);">IP Address - as_name</div>
<div class="t" id="h5" style="left:1205.50px;top:157.40px;font-size:15.65px;line-height:15.65px;font-family:'Liberation Sans', sans-serif;color:#444;font-weight:400;transform:scaleX(1.0862);">IP Address - as_num</div>
<div class="t" id="r0c0" style="left:89.80px;top:212.13px;font-size:15.88px;line-height:15.88px;font-family:'Liberation Mono', monospace;color:#333;font-weight:400;transform-origin:0 12.17px;transform:scaleY(1.12);">1</div>
<div class="t" id="r0c1" style="left:298.60px;top:212.13px;font-size:15.88px;line-height:15.88px;font-family:'Liberation Mono', monospace;color:#333;font-weight:400;transform-origin:0 12.17px;transform:scaleY(1.12);">162.243.146.34</div>
<div class="t" id="r0c2" style="left:506.10px;top:212.13px;font-size:15.88px;line-height:15.88px;font-family:'Liberation Mono', monospace;color:#333;font-weight:400;transform-origin:0 12.17px;transform:scaleY(1.12);">200</div>
<div class="t" id="r0c3" style="left:839.20px;top:212.13px;font-size:15.88px;line-height:15.88px;font-family:'Liberation Mono', monospace;color:#333;font-weight:400;transform-origin:0 12.17px;transform:scaleY(1.12);">DIGITALOCEAN-ASN</div>
<div class="t" id="r0c4" style="left:1161.90px;top:212.13px;font-size:15.88px;line-height:15.88px;font-family:'Liberation Mono', monospace;color:#333;font-weight:400;transform-origin:0 12.17px;transform:scaleY(1.12);">14061</div>
<div class="t" id="r1c0" style="left:89.80px;top:259.53px;font-size:15.88px;line-height:15.88px;font-family:'Liberation Mono', monospace;color:#333;font-weight:400;transform-origin:0 12.17px;transform:scaleY(1.12);">2</div>
<div class="t" id="r1c1" style="left:298.60px;top:259.53px;font-size:15.88px;line-height:15.88px;font-family:'Liberation Mono', monospace;color:#333;font-weight:400;transform-origin:0 12.17px;transform:scaleY(1.12);">176.124.223.175</div>
<div class="t" id="r1c2" style="left:506.10px;top:259.53px;font-size:15.88px;line-height:15.88px;font-family:'Liberation Mono', monospace;color:#333;font-weight:400;transform-origin:0 12.17px;transform:scaleY(1.12);">200</div>
<div class="t" id="r1c3" style="left:839.20px;top:259.53px;font-size:15.88px;line-height:15.88px;font-family:'Liberation Mono', monospace;color:#333;font-weight:400;transform-origin:0 12.17px;transform:scaleY(1.12);">Cloud assets LLC</div>
<div class="t" id="r1c4" style="left:1161.90px;top:259.53px;font-size:15.88px;line-height:15.88px;font-family:'Liberation Mono', monospace;color:#333;font-weight:400;transform-origin:0 12.17px;transform:scaleY(1.12);">212441</div>
<div class="t" id="r2c0" style="left:89.80px;top:306.93px;font-size:15.88px;line-height:15.88px;font-family:'Liberation Mono', monospace;color:#333;font-weight:400;transform-origin:0 12.17px;transform:scaleY(1.12);">3</div>
<div class="t" id="r2c1" style="left:298.60px;top:306.93px;font-size:15.88px;line-height:15.88px;font-family:'Liberation Mono', monospace;color:#333;font-weight:400;transform-origin:0 12.17px;transform:scaleY(1.12);">165.22.220.65</div>
<div class="t" id="r2c2" style="left:506.10px;top:306.93px;font-size:15.88px;line-height:15.88px;font-family:'Liberation Mono', monospace;color:#333;font-weight:400;transform-origin:0 12.17px;transform:scaleY(1.12);">200</div>
<div class="t" id="r2c3" style="left:839.20px;top:306.93px;font-size:15.88px;line-height:15.88px;font-family:'Liberation Mono', monospace;color:#333;font-weight:400;transform-origin:0 12.17px;transform:scaleY(1.12);">DIGITALOCEAN-ASN</div>
<div class="t" id="r2c4" style="left:1161.90px;top:306.93px;font-size:15.88px;line-height:15.88px;font-family:'Liberation Mono', monospace;color:#333;font-weight:400;transform-origin:0 12.17px;transform:scaleY(1.12);">14061</div>
<div class="t" id="r3c0" style="left:89.80px;top:354.33px;font-size:15.88px;line-height:15.88px;font-family:'Liberation Mono', monospace;color:#333;font-weight:400;transform-origin:0 12.17px;transform:scaleY(1.12);">4</div>
<div class="t" id="r3c1" style="left:298.60px;top:354.33px;font-size:15.88px;line-height:15.88px;font-family:'Liberation Mono', monospace;color:#333;font-weight:400;transform-origin:0 12.17px;transform:scaleY(1.12);">45.156.128.17</div>
<div class="t" id="r3c2" style="left:506.10px;top:354.33px;font-size:15.88px;line-height:15.88px;font-family:'Liberation Mono', monospace;color:#333;font-weight:400;transform-origin:0 12.17px;transform:scaleY(1.12);">200</div>
<div class="t" id="r3c3" style="left:839.20px;top:354.33px;font-size:15.88px;line-height:15.88px;font-family:'Liberation Mono', monospace;color:#333;font-weight:400;transform-origin:0 12.17px;transform:scaleY(1.12);">Sistemas Informaticos, S.A.</div>
<div class="t" id="r3c4" style="left:1161.90px;top:354.33px;font-size:15.88px;line-height:15.88px;font-family:'Liberation Mono', monospace;color:#333;font-weight:400;transform-origin:0 12.17px;transform:scaleY(1.12);">211680</div>
<div class="t" id="r4c0" style="left:89.80px;top:401.73px;font-size:15.88px;line-height:15.88px;font-family:'Liberation Mono', monospace;color:#333;font-weight:400;transform-origin:0 12.17px;transform:scaleY(1.12);">5</div>
<div class="t" id="r4c1" style="left:298.60px;top:401.73px;font-size:15.88px;line-height:15.88px;font-family:'Liberation Mono', monospace;color:#333;font-weight:400;transform-origin:0 12.17px;transform:scaleY(1.12);">165.22.247.85</div>
<div class="t" id="r4c2" style="left:506.10px;top:401.73px;font-size:15.88px;line-height:15.88px;font-family:'Liberation Mono', monospace;color:#333;font-weight:400;transform-origin:0 12.17px;transform:scaleY(1.12);">200</div>
<div class="t" id="r4c3" style="left:839.20px;top:401.73px;font-size:15.88px;line-height:15.88px;font-family:'Liberation Mono', monospace;color:#333;font-weight:400;transform-origin:0 12.17px;transform:scaleY(1.12);">DIGITALOCEAN-ASN</div>
<div class="t" id="r4c4" style="left:1161.90px;top:401.73px;font-size:15.88px;line-height:15.88px;font-family:'Liberation Mono', monospace;color:#333;font-weight:400;transform-origin:0 12.17px;transform:scaleY(1.12);">14061</div>
<div class="t" id="r5c0" style="left:89.80px;top:449.13px;font-size:15.88px;line-height:15.88px;font-family:'Liberation Mono', monospace;color:#333;font-weight:400;transform-origin:0 12.17px;transform:scaleY(1.12);">6</div>
<div class="t" id="r5c1" style="left:298.60px;top:449.13px;font-size:15.88px;line-height:15.88px;font-family:'Liberation Mono', monospace;color:#333;font-weight:400;transform-origin:0 12.17px;transform:scaleY(1.12);">165.227.15.237</div>
<div class="t" id="r5c2" style="left:506.10px;top:449.13px;font-size:15.88px;line-height:15.88px;font-family:'Liberation Mono', monospace;color:#333;font-weight:400;transform-origin:0 12.17px;transform:scaleY(1.12);">200</div>
<div class="t" id="r5c3" style="left:839.20px;top:449.13px;font-size:15.88px;line-height:15.88px;font-family:'Liberation Mono', monospace;color:#333;font-weight:400;transform-origin:0 12.17px;transform:scaleY(1.12);">DIGITALOCEAN-ASN</div>
<div class="t" id="r5c4" style="left:1161.90px;top:449.13px;font-size:15.88px;line-height:15.88px;font-family:'Liberation Mono', monospace;color:#333;font-weight:400;transform-origin:0 12.17px;transform:scaleY(1.12);">14061</div>
<div class="t" id="r6c0" style="left:89.80px;top:496.53px;font-size:15.88px;line-height:15.88px;font-family:'Liberation Mono', monospace;color:#333;font-weight:400;transform-origin:0 12.17px;transform:scaleY(1.12);">7</div>
<div class="t" id="r6c1" style="left:298.60px;top:496.53px;font-size:15.88px;line-height:15.88px;font-family:'Liberation Mono', monospace;color:#333;font-weight:400;transform-origin:0 12.17px;transform:scaleY(1.12);">157.245.232.44</div>
<div class="t" id="r6c2" style="left:506.10px;top:496.53px;font-size:15.88px;line-height:15.88px;font-family:'Liberation Mono', monospace;color:#333;font-weight:400;transform-origin:0 12.17px;transform:scaleY(1.12);">200</div>
<div class="t" id="r6c3" style="left:839.20px;top:496.53px;font-size:15.88px;line-height:15.88px;font-family:'Liberation Mono', monospace;color:#333;font-weight:400;transform-origin:0 12.17px;transform:scaleY(1.12);">DIGITALOCEAN-ASN</div>
<div class="t" id="r6c4" style="left:1161.90px;top:496.53px;font-size:15.88px;line-height:15.88px;font-family:'Liberation Mono', monospace;color:#333;font-weight:400;transform-origin:0 12.17px;transform:scaleY(1.12);">14061</div>
<div class="t" id="r7c0" style="left:89.80px;top:543.93px;font-size:15.88px;line-height:15.88px;font-family:'Liberation Mono', monospace;color:#333;font-weight:400;transform-origin:0 12.17px;transform:scaleY(1.12);">8</div>
<div class="t" id="r7c1" style="left:298.60px;top:543.93px;font-size:15.88px;line-height:15.88px;font-family:'Liberation Mono', monospace;color:#333;font-weight:400;transform-origin:0 12.17px;transform:scaleY(1.12);">200.8.231.140</div>
<div class="t" id="r7c2" style="left:506.10px;top:543.93px;font-size:15.88px;line-height:15.88px;font-family:'Liberation Mono', monospace;color:#333;font-weight:400;transform-origin:0 12.17px;transform:scaleY(1.12);">200</div>
<div class="t" id="r7c3" style="left:839.20px;top:543.93px;font-size:15.88px;line-height:15.88px;font-family:'Liberation Mono', monospace;color:#333;font-weight:400;transform-origin:0 12.17px;transform:scaleY(1.12);">Corporacion Telemic C.A.</div>
<div class="t" id="r7c4" style="left:1161.90px;top:543.93px;font-size:15.88px;line-height:15.88px;font-family:'Liberation Mono', monospace;color:#333;font-weight:400;transform-origin:0 12.17px;transform:scaleY(1.12);">21826</div>
<div class="t" id="r8c0" style="left:89.80px;top:591.33px;font-size:15.88px;line-height:15.88px;font-family:'Liberation Mono', monospace;color:#333;font-weight:400;transform-origin:0 12.17px;transform:scaleY(1.12);">9</div>
<div class="t" id="r8c1" style="left:298.60px;top:591.33px;font-size:15.88px;line-height:15.88px;font-family:'Liberation Mono', monospace;color:#333;font-weight:400;transform-origin:0 12.17px;transform:scaleY(1.12);">159.89.104.182</div>
<div class="t" id="r8c2" style="left:506.10px;top:591.33px;font-size:15.88px;line-height:15.88px;font-family:'Liberation Mono', monospace;color:#333;font-weight:400;transform-origin:0 12.17px;transform:scaleY(1.12);">200</div>
<div class="t" id="r8c3" style="left:839.20px;top:591.33px;font-size:15.88px;line-height:15.88px;font-family:'Liberation Mono', monospace;color:#333;font-weight:400;transform-origin:0 12.17px;transform:scaleY(1.12);">DIGITALOCEAN-ASN</div>
<div class="t" id="r8c4" style="left:1161.90px;top:591.33px;font-size:15.88px;line-height:15.88px;font-family:'Liberation Mono', monospace;color:#333;font-weight:400;transform-origin:0 12.17px;transform:scaleY(1.12);">14061</div>
<div class="t" id="r9c0" style="left:89.80px;top:638.73px;font-size:15.88px;line-height:15.88px;font-family:'Liberation Mono', monospace;color:#333;font-weight:400;transform-origin:0 12.17px;transform:scaleY(1.12);">10</div>
<div class="t" id="r9c1" style="left:298.60px;top:638.73px;font-size:15.88px;line-height:15.88px;font-family:'Liberation Mono', monospace;color:#333;font-weight:400;transform-origin:0 12.17px;transform:scaleY(1.12);">157.230.223.5</div>
<div class="t" id="r9c2" style="left:506.10px;top:638.73px;font-size:15.88px;line-height:15.88px;font-family:'Liberation Mono', monospace;color:#333;font-weight:400;transform-origin:0 12.17px;transform:scaleY(1.12);">200</div>
<div class="t" id="r9c3" style="left:839.20px;top:638.73px;font-size:15.88px;line-height:15.88px;font-family:'Liberation Mono', monospace;color:#333;font-weight:400;transform-origin:0 12.17px;transform:scaleY(1.12);">DIGITALOCEAN-ASN</div>
<div class="t" id="r9c4" style="left:1161.90px;top:638.73px;font-size:15.88px;line-height:15.88px;font-family:'Liberation Mono', monospace;color:#333;font-weight:400;transform-origin:0 12.17px;transform:scaleY(1.12);">14061</div>
<div class="t" id="hideall" style="left:1598.00px;top:292.52px;font-size:19.86px;line-height:19.86px;font-family:'Liberation Sans', sans-serif;color:#221c86;font-weight:400;transform:scaleX(1.0448);">Hide All</div>
<div class="t" id="showall" style="left:1727.00px;top:292.52px;font-size:19.86px;line-height:19.86px;font-family:'Liberation Sans', sans-serif;color:#221c86;font-weight:400;transform:scaleX(1.0263);">Show All</div>
<div class="t" id="rowgroups" style="left:1603.80px;top:702.75px;font-size:20.29px;line-height:20.29px;font-family:'Liberation Sans', sans-serif;color:#222;font-weight:400;transform:scaleX(1.0735);">Row Groups</div>
<div class="t" id="drag1" style="left:1580.50px;top:773.72px;font-size:19.28px;line-height:19.28px;font-family:'Liberation Sans', sans-serif;color:#5f6163;font-weight:400;transform:scaleX(1.1142);">Drag here to set row groups</div>
<div class="t" id="values" style="left:1603.80px;top:864.45px;font-size:20.29px;line-height:20.29px;font-family:'Liberation Sans', sans-serif;color:#222;font-weight:400;transform:scaleX(1.1098);">Values</div>
<div class="t" id="drag2" style="left:1580.50px;top:935.92px;font-size:19.28px;line-height:19.28px;font-family:'Liberation Sans', sans-serif;color:#5f6163;font-weight:400;transform:scaleX(1.1417);">Drag here to aggregate</div>
<div class="t" id="view" style="left:94.30px;top:1020.39px;font-size:21.30px;line-height:21.30px;font-family:'Liberation Sans', sans-serif;color:#111;font-weight:700;transform:scaleX(1.0354);">View</div>
<div class="t" id="v100" style="left:169.00px;top:1022.10px;font-size:18.12px;line-height:18.12px;font-family:'Liberation Sans', sans-serif;color:#333;font-weight:400;transform:scaleX(0.8667);">100</div>
<div class="t" id="page" style="left:384.50px;top:1021.85px;font-size:17.83px;line-height:17.83px;font-family:'Liberation Sans', sans-serif;color:#444;font-weight:400;transform:scaleX(0.9643);">Page</div>
<div class="t" id="pg1" style="left:456.00px;top:1021.85px;font-size:17.83px;line-height:17.83px;font-family:'Liberation Sans', sans-serif;color:#444;font-weight:400;">1</div>
<div class="t" id="of1" style="left:495.80px;top:1021.85px;font-size:17.83px;line-height:17.83px;font-family:'Liberation Sans', sans-serif;color:#444;font-weight:400;transform:scaleX(0.8067);">of 1</div>
<div class="t" id="rs" style="left:651.20px;top:1020.95px;font-size:20.29px;line-height:20.29px;font-family:'Liberation Sans', sans-serif;color:#333;font-weight:700;transform:scaleX(0.9396);">Result Set:</div>
<div class="t" id="rows" style="left:763.70px;top:1020.95px;font-size:20.29px;line-height:20.29px;font-family:'Liberation Sans', sans-serif;color:#444;font-weight:400;transform:scaleX(0.9577);">10 rows</div>
<div class="t" id="p1" style="left:1653.40px;top:44.41px;font-size:18.70px;line-height:18.70px;font-family:'Liberation Sans', sans-serif;color:#333;font-weight:700;transform:scaleX(0.9690);">Processing...</div>
<div class="t" id="p2" style="left:1653.40px;top:70.84px;font-size:19.13px;line-height:19.13px;font-family:'Liberation Sans', sans-serif;color:#777;font-weight:400;transform:scaleX(1.0414);">This could take up to 60 minutes.</div>
<div class="t" id="p3" style="left:1653.40px;top:97.34px;font-size:19.13px;line-height:19.13px;font-family:'Liberation Sans', sans-serif;color:#777;font-weight:400;transform:scaleX(1.0461);">We'll email you with updates.</div>
<div class="t" id="w1" style="left:1664.00px;top:180.94px;font-size:19.13px;line-height:19.13px;font-family:'Liberation Sans', sans-serif;color:#333;font-weight:700;transform:scaleX(0.9856);">It worked!</div>
<div class="t" id="w2" style="left:1664.00px;top:207.56px;font-size:18.99px;line-height:18.99px;font-family:'Liberation Sans', sans-serif;color:#777;font-weight:400;transform:scaleX(1.0591);">Custom Enrichment Complete!</div>
<div class="t" id="badge" style="left:1917.50px;top:960.38px;font-size:14.49px;line-height:14.49px;font-family:'Liberation Sans', sans-serif;color:#fff;font-weight:700;">1</div>
<div class="t" id="qmark" style="left:20.50px;top:503.06px;font-size:28.99px;line-height:28.99px;font-family:'Liberation Sans', sans-serif;color:#fff;font-weight:700;transform:scaleX(0.8333);">?</div>
</body></html>
